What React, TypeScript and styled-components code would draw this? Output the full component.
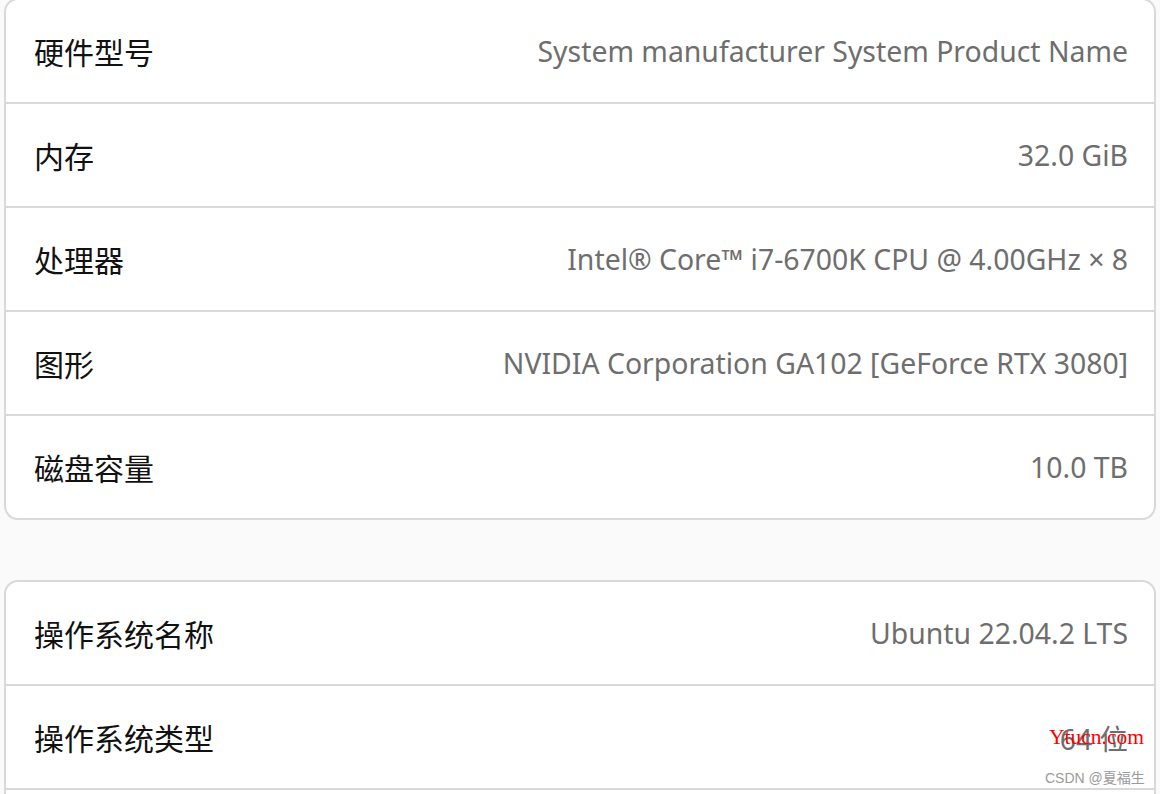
import React from "react";
import styled, { createGlobalStyle } from "styled-components";

const Global = createGlobalStyle`
  html, body {
    margin: 0;
    padding: 0;
    height: 794px;
    overflow: hidden;
    background: #fafafa;
  }
  body {
    font-family: "Noto Sans", "Noto Sans CJK SC", sans-serif;
  }
`;

const Page = styled.div`
  position: relative;
  height: 796px;
  overflow: hidden;
  padding: 0 4px;
  margin-top: -2px;
  display: flex;
  flex-direction: column;
  gap: 60px;
  box-sizing: border-box;
`;

const Card = styled.div`
  flex-shrink: 0;
  background: #ffffff;
  border: 2px solid #d9d9d9;
  border-radius: 14px;
  overflow: hidden;
  display: flex;
  flex-direction: column;
`;

const Row = styled.div`
  flex-shrink: 0;
  height: 102px;
  display: flex;
  align-items: center;
  justify-content: space-between;
  padding: 0 26px 0 28px;
  border-bottom: 2px solid #d9d9d9;
  &:last-child {
    border-bottom: none;
  }
`;

const Label = styled.span`
  font-family: "Noto Sans CJK SC", sans-serif;
  font-size: 30px;
  color: #111111;
`;

const Value = styled.span`
  font-family: "Noto Sans", "Noto Sans CJK SC", sans-serif;
  font-size: 28.4px;
  color: #6e6e6e;
`;

const WatermarkSite = styled.div`
  position: absolute;
  left: 1049px;
  top: 727px;
  font-family: "Liberation Serif", serif;
  font-size: 21.5px;
  color: #ff0000;
`;

const WatermarkAuthor = styled.div`
  position: absolute;
  left: 1045px;
  top: 769px;
  font-family: "Liberation Sans", "Noto Sans CJK SC", sans-serif;
  font-size: 14px;
  color: #9a9a9a;
`;

const hardware = [
  ["硬件型号", "System manufacturer System Product Name"],
  ["内存", "32.0 GiB"],
  ["处理器", "Intel® Core™ i7-6700K CPU @ 4.00GHz × 8"],
  ["图形", "NVIDIA Corporation GA102 [GeForce RTX 3080]"],
  ["磁盘容量", "10.0 TB"],
];

const software = [
  ["操作系统名称", "Ubuntu 22.04.2 LTS"],
  ["操作系统类型", "64 位"],
];

export default function App() {
  return (
    <>
      <Global />
      <Page>
        <Card>
          {hardware.map(([k, v]) => (
            <Row key={k}>
              <Label>{k}</Label>
              <Value>{v}</Value>
            </Row>
          ))}
        </Card>
        <Card>
          {software.map(([k, v]) => (
            <Row key={k}>
              <Label>{k}</Label>
              <Value>{v}</Value>
            </Row>
          ))}
          <Row />
        </Card>
        <WatermarkSite>Ytucn.com</WatermarkSite>
        <WatermarkAuthor>CSDN @夏福生</WatermarkAuthor>
      </Page>
    </>
  );
}
